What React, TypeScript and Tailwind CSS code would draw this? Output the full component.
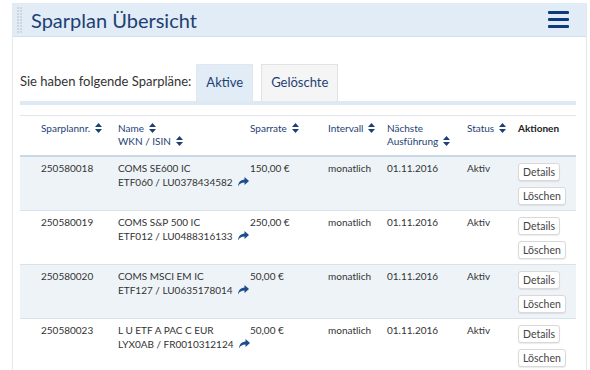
import React from 'react';

interface Plan {
  nr: string;
  name: string;
  isin: string;
  rate: string;
  interval: string;
  next: string;
  status: string;
}

const PLANS: Plan[] = [
  { nr: '250580018', name: 'COMS SE600 IC', isin: 'ETF060 / LU0378434582', rate: '150,00 €', interval: 'monatlich', next: '01.11.2016', status: 'Aktiv' },
  { nr: '250580019', name: 'COMS S&P 500 IC', isin: 'ETF012 / LU0488316133', rate: '250,00 €', interval: 'monatlich', next: '01.11.2016', status: 'Aktiv' },
  { nr: '250580020', name: 'COMS MSCI EM IC', isin: 'ETF127 / LU0635178014', rate: '50,00 €', interval: 'monatlich', next: '01.11.2016', status: 'Aktiv' },
  { nr: '250580023', name: 'L U ETF A PAC C EUR', isin: 'LYX0AB / FR0010312124', rate: '50,00 €', interval: 'monatlich', next: '01.11.2016', status: 'Aktiv' },
];

const COLS = 'grid grid-cols-[98px_132px_78px_59px_80px_51px_58px]';

const SortIcon = () => (
  <svg className="inline-block ml-[5px] align-[-1px]" width="7" height="10" viewBox="0 0 7 10">
    <path d="M3.5 0 L7 4 H0 Z M0 6 H7 L3.5 10 Z" fill="#1d3f74" />
  </svg>
);

// curved "share" arrow after the ISIN
const ShareIcon = () => (
  <svg className="inline-block ml-[5px] align-[-1px]" width="11" height="10" viewBox="0 0 11 10">
    <path d="M6.5 0 L11 4 L6.5 8 V5.5 C3.5 5.5 1.5 6.5 0 9.5 C0.3 5.5 2.5 2.8 6.5 2.5 Z" fill="#1d4c8c" />
  </svg>
);

// drag handle: two columns of small grey dots
const Grip = () => (
  <div className="grid grid-cols-2 gap-[1px] ml-[4px] mr-[9px]">
    {Array.from({ length: 18 }).map((_, i) => (
      <span key={i} className="block w-[2px] h-[2px] bg-[#cdd5dd]" />
    ))}
  </div>
);

const Btn = ({ label }: { label: string }) => (
  <button className="h-[18px] px-[4px] bg-white border border-[#d9d9d9] rounded-[3px] shadow-[0_1px_1px_rgba(0,0,0,0.08)] text-[10.5px] leading-[16px] text-[#444]">
    {label}
  </button>
);

export default function App() {
  return (
    <div className="w-[590px] h-[370px] overflow-hidden bg-white pt-[3px] pl-[12px] pr-[3px]" style={{ fontFamily: 'Lato, "Noto Sans", sans-serif' }}>
      <div className="h-[367px] border-l border-r border-[#e6e9ec] bg-white">
        {/* Header */}
        <div className="h-[34px] bg-[#e1ecf6] border-b border-[#d3dfea] flex items-center">
          <Grip />
          <h1 className="text-[20px] leading-none text-[#1d3f74]">Sparplan Übersicht</h1>
          <div className="ml-auto mr-[17px] flex flex-col gap-[4px]">
            <span className="block w-[21px] h-[3px] rounded-[1px] bg-[#0d3a7a]" />
            <span className="block w-[21px] h-[3px] rounded-[1px] bg-[#0d3a7a]" />
            <span className="block w-[21px] h-[3px] rounded-[1px] bg-[#0d3a7a]" />
          </div>
        </div>

        <div className="px-[7px]">
          {/* Tabs */}
          <div className="mt-[27px] flex items-end">
            <span className="text-[13px] text-[#333] pb-[10px] mr-[5px]">Sie haben folgende Sparpläne:</span>
            <div className="h-[37px] px-[9px] bg-[#e1ecf6] border border-[#dfe8f0] border-b-0 flex items-center text-[13px] text-[#1d3f74]">
              Aktive
            </div>
            <div className="ml-[8px] h-[37px] px-[9px] bg-[#f5f5f5] border border-[#e2e2e2] border-b-0 flex items-center text-[13px] text-[#1d3f74]">
              Gelöschte
            </div>
          </div>
          <div className="h-[4px] bg-[#dde9f3] mr-[3px]" />

          {/* Table */}
          <div className="mt-[10px] mr-[3px] border-t border-[#e1e6eb] text-[10px] leading-[14px]">
            <div className={`${COLS} h-[41px] pt-[6px] leading-[13px] border-b-2 border-[#c9d8e6] text-[#1d3f74]`}>
              <div className="pl-[21px]">Sparplannr.<SortIcon /></div>
              <div>Name<SortIcon /><br />WKN / ISIN<SortIcon /></div>
              <div>Sparrate<SortIcon /></div>
              <div>Intervall<SortIcon /></div>
              <div>Nächste<br />Ausführung<SortIcon /></div>
              <div>Status<SortIcon /></div>
              <div className="font-bold text-[#222]">Aktionen</div>
            </div>
            {PLANS.map((p, i) => (
              <div
                key={p.nr}
                className={`${COLS} h-[54px] border-b border-[#d8e2ec] text-[#333] ${i % 2 === 0 ? 'bg-[#eef3f8]' : 'bg-white'}`}
              >
                <div className="pl-[21px] pt-[4px]">{p.nr}</div>
                <div className="pt-[4px] whitespace-nowrap">
                  {p.name}
                  <br />
                  {p.isin}
                  <ShareIcon />
                </div>
                <div className="pt-[4px]">{p.rate}</div>
                <div className="pt-[4px]">{p.interval}</div>
                <div className="pt-[4px]">{p.next}</div>
                <div className="pt-[4px]">{p.status}</div>
                <div className="pt-[6px] flex flex-col items-start gap-[6px]">
                  <Btn label="Details" />
                  <Btn label="Löschen" />
                </div>
              </div>
            ))}
          </div>
        </div>
      </div>
    </div>
  );
}
